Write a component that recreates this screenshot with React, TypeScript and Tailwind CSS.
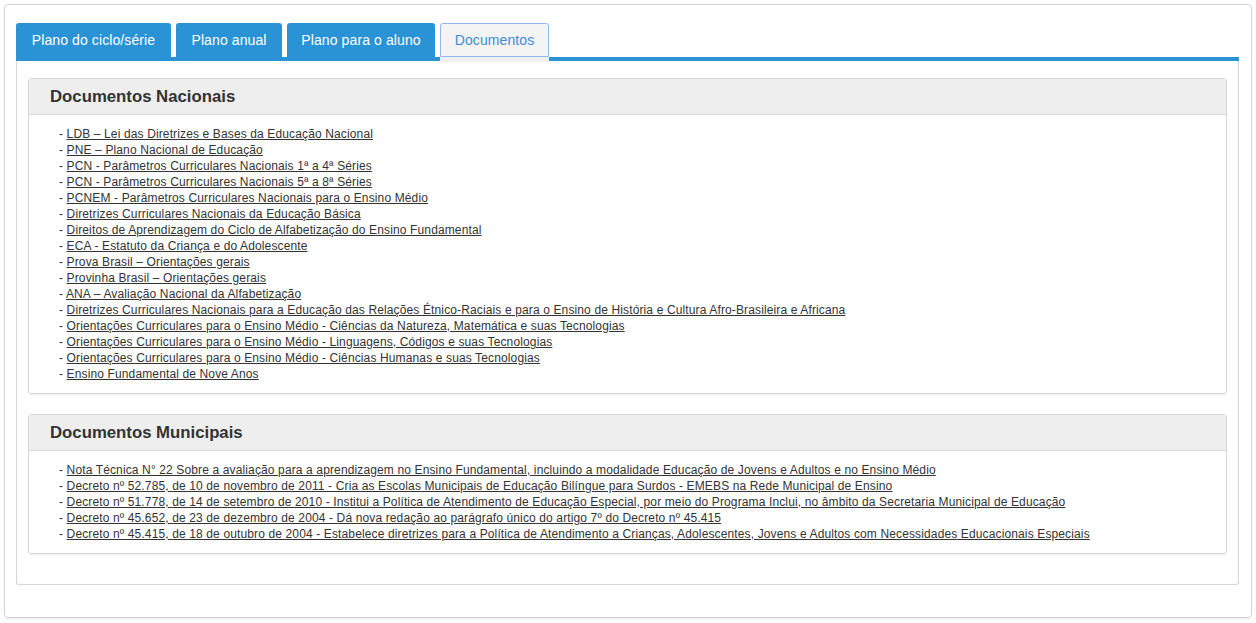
import React from 'react';

const nacionais = [
  'LDB – Lei das Diretrizes e Bases da Educação Nacional',
  'PNE – Plano Nacional de Educação',
  'PCN - Parâmetros Curriculares Nacionais 1ª a 4ª Séries',
  'PCN - Parâmetros Curriculares Nacionais 5ª a 8ª Séries',
  'PCNEM - Parâmetros Curriculares Nacionais para o Ensino Médio',
  'Diretrizes Curriculares Nacionais da Educação Básica',
  'Direitos de Aprendizagem do Ciclo de Alfabetização do Ensino Fundamental',
  'ECA - Estatuto da Criança e do Adolescente',
  'Prova Brasil – Orientações gerais',
  'Provinha Brasil – Orientações gerais',
  'ANA – Avaliação Nacional da Alfabetização',
  'Diretrizes Curriculares Nacionais para a Educação das Relações Étnico-Raciais e para o Ensino de História e Cultura Afro-Brasileira e Africana',
  'Orientações Curriculares para o Ensino Médio - Ciências da Natureza, Matemática e suas Tecnologias',
  'Orientações Curriculares para o Ensino Médio - Linguagens, Códigos e suas Tecnologias',
  'Orientações Curriculares para o Ensino Médio - Ciências Humanas e suas Tecnologias',
  'Ensino Fundamental de Nove Anos',
];

const municipais = [
  'Nota Técnica N° 22 Sobre a avaliação para a aprendizagem no Ensino Fundamental, incluindo a modalidade Educação de Jovens e Adultos e no Ensino Médio',
  'Decreto nº 52.785, de 10 de novembro de 2011 - Cria as Escolas Municipais de Educação Bilíngue para Surdos - EMEBS na Rede Municipal de Ensino',
  'Decreto nº 51.778, de 14 de setembro de 2010 - Institui a Política de Atendimento de Educação Especial, por meio do Programa Inclui, no âmbito da Secretaria Municipal de Educação',
  'Decreto nº 45.652, de 23 de dezembro de 2004 - Dá nova redação ao parágrafo único do artigo 7º do Decreto nº 45.415',
  'Decreto nº 45.415, de 18 de outubro de 2004 - Estabelece diretrizes para a Política de Atendimento a Crianças, Adolescentes, Jovens e Adultos com Necessidades Educacionais Especiais',
];

const tabs = [
  { label: 'Plano do ciclo/série', w: 'w-[155px]' },
  { label: 'Plano anual', w: 'w-[106px]' },
  { label: 'Plano para o aluno', w: 'w-[148px]' },
];

const DocPanel = ({ title, items }: { title: string; items: string[] }) => (
  <div className="border border-[#d6d6d6] rounded-[3px] shadow-[0_1px_1px_rgba(0,0,0,0.06)]">
    <div className="h-[36px] bg-[#eeeeee] border-b border-[#d9d9d9] pl-[21px] flex items-center">
      <h2 className="text-[16.75px] font-bold text-[#333]">{title}</h2>
    </div>
    <ul className="pl-[30px] pt-[11px] pb-[11px] text-[12px] leading-[16px] tracking-[0.13px] text-[#333]">
      {items.map((item) => (
        <li key={item}>
          - <a href="#" className="underline text-[#333]">{item}</a>
        </li>
      ))}
    </ul>
  </div>
);

const App = () => {
  return (
    <div className="min-h-screen bg-white pt-[4px] pl-[4px] font-['Liberation_Sans',Arial,sans-serif]">
      <div className="w-[1248px] h-[614px] border border-[#d4d4d4] rounded-[4px] shadow-[0_1px_2px_rgba(0,0,0,0.08)] pt-[18px] pl-[11px] pr-[12px]">
        <div className="flex items-start gap-[5px] border-b-[4px] border-[#2a93d5] h-[38px]">
          {tabs.map((t) => (
            <div
              key={t.label}
              className={`${t.w} h-[34px] flex items-center justify-center bg-[#2a93d5] text-white text-[14px] tracking-[0.1px] rounded-t-[3px]`}
            >
              {t.label}
            </div>
          ))}
          <div className="flex flex-col w-[109px]">
            <div className="h-[34px] flex items-center justify-center bg-[#f4f4f4] border border-[#94b6ef] text-[#3f8cd8] text-[14px] tracking-[0.1px] rounded-t-[3px]">
              Documentos
            </div>
            <div className="h-[5px] bg-[#f0f0f0]" />
          </div>
        </div>
        <div className="border-x border-b border-[#d6d6d6] rounded-b-[3px] pt-[17px] px-[11px] pb-[30px] flex flex-col gap-[20px]">
          <DocPanel title="Documentos Nacionais" items={nacionais} />
          <DocPanel title="Documentos Municipais" items={municipais} />
        </div>
      </div>
    </div>
  );
};

export default App;
